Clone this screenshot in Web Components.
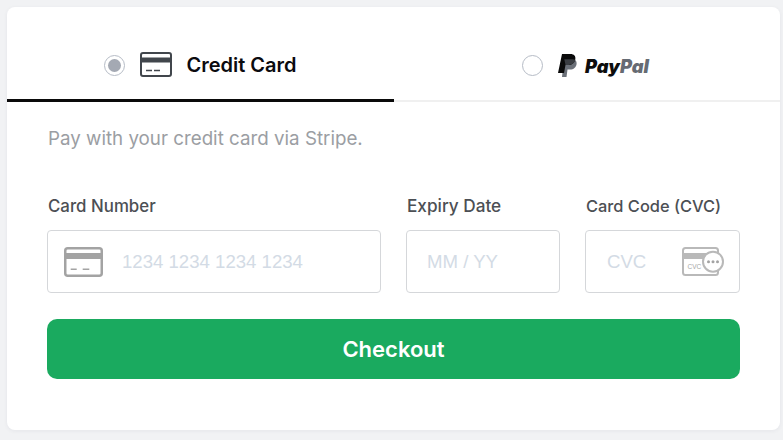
<!DOCTYPE html>
<html>
<head>
<meta charset="utf-8">
<style>
  html, body { margin: 0; height: 100%; background: #f1f2f4; }
  body { padding: 7px 3px 10px 7px; box-sizing: border-box; font-family: Inter, "Liberation Sans", sans-serif; overflow: hidden; }
</style>
</head>
<body>
<checkout-card>
  <pay-tab slot="tabs" active label="Credit Card">
    <svg slot="icon" width="32" height="26" viewBox="0 0 32 26">
      <rect x="1" y="1" width="30" height="23" rx="2" fill="#fff" stroke="#41464c" stroke-width="2"/>
      <rect x="1" y="5.500" width="30" height="5" fill="#41464c"/>
      <path d="M6 18.500h6M14 18.500h6" stroke="#41464c" stroke-width="1.400"/>
    </svg>
  </pay-tab>
  <pay-tab slot="tabs">
    <svg slot="icon" width="20" height="23" viewBox="0 0 20 23">
      <path d="M6 5h8c3 0 5 2 4.600 5-.5 3.500-3 5.500-6.500 5.500H9.500L8.500 23H4z" fill="#6b7078"/>
      <path d="M4 0h8.500c3.500 0 5.500 2.200 4.800 5.500-.7 3.500-3.500 5.500-7 5.500H7.500L6 19H0z" fill="#0a0a0a"/>
      <path d="M6.300 5.200h8c1.300 0 2.300.3 3 .9-.8 3-3.400 4.900-6.800 4.900H7.500z" fill="#3a3d42"/>
    </svg>
    <span slot="brand" class="pp"><b style="color:#0d0d0d">Pay</b><b style="color:#666b73">Pal</b></span>
  </pay-tab>

  <p slot="note">Pay with your credit card via Stripe.</p>

  <card-field slot="fields" label="Card Number" placeholder="1234 1234 1234 1234" lead style="--label-size: 16.850px">
    <svg slot="lead" width="39" height="30" viewBox="0 0 39 30">
      <rect x="1.250" y="1.250" width="36.500" height="27.500" rx="2.500" fill="#fff" stroke="#a3a3a3" stroke-width="2.500"/>
      <rect x="1.250" y="6" width="36.500" height="6" fill="#a3a3a3"/>
      <path d="M6.700 22.300h6M18.700 22.300h6.600" stroke="#a3a3a3" stroke-width="1.500"/>
    </svg>
  </card-field>
  <card-field slot="fields" label="Expiry Date" placeholder="MM / YY" style="--label-size: 17.200px; --ph-inset: 0px"></card-field>
  <card-field slot="fields" label="Card Code (CVC)" placeholder="CVC" style="--label-size: 16.400px">
    <svg slot="trail" width="42" height="29" viewBox="0 0 42 29">
      <rect x="1" y="1" width="35" height="27" rx="2.500" fill="#fff" stroke="#b9b9b9" stroke-width="2"/>
      <rect x="1" y="6" width="35" height="6" fill="#b9b9b9"/>
      <text x="5.500" y="21.500" font-family="Liberation Sans" font-size="6.500" fill="#a8a8a8">CVC</text>
      <circle cx="31" cy="14.700" r="10" fill="#fff" stroke="#b9b9b9" stroke-width="2"/>
      <circle cx="26.500" cy="14.700" r="1.500" fill="#a3a3a3"/>
      <circle cx="31" cy="14.700" r="1.500" fill="#a3a3a3"/>
      <circle cx="35.500" cy="14.700" r="1.500" fill="#a3a3a3"/>
    </svg>
  </card-field>

  <button-pay slot="action">Checkout</button-pay>
</checkout-card>

<script>
  class CheckoutCard extends HTMLElement {
    constructor() {
      super();
      this.attachShadow({mode: "open"}).innerHTML = `
        <style>
          :host {
            display: block;
            height: 423px;
            background: #fff;
            border-radius: 8px;
            box-shadow: 0 1px 4px rgba(30, 40, 60, .06);
            overflow: hidden;
          }
          .tabs { display: grid; grid-template-columns: 387px 1fr; height: 95px; }
          .body { padding: 22px 40px 0; }
          ::slotted(p) {
            margin: 0;
            padding-left: 1px;
            font-size: 18.750px;
            line-height: 30px;
            color: #9b9ea3;
          }
          .fields {
            display: grid;
            grid-template-columns: 334px 154px 155px;
            column-gap: 25px;
            margin-top: 41px;
          }
          .action { margin-top: 26px; }
        </style>
        <div class="tabs"><slot name="tabs"></slot></div>
        <div class="body">
          <slot name="note"></slot>
          <div class="fields"><slot name="fields"></slot></div>
          <div class="action"><slot name="action"></slot></div>
        </div>`;
    }
  }

  class PayTab extends HTMLElement {
    constructor() {
      super();
      this.attachShadow({mode: "open"}).innerHTML = `
        <style>
          :host {
            display: flex;
            align-items: center;
            justify-content: center;
            box-sizing: border-box;
            border-bottom: 2px solid #f0f0f0;
            padding-top: 24px;
            padding-right: 3px;
          }
          :host([active]) { border-bottom: 3px solid #0a0a0a; padding-right: 0; }
          .radio {
            width: 19px; height: 19px;
            border: 1px solid #b6bcc6;
            border-radius: 50%;
            background: #fff;
            display: grid;
            place-items: center;
            margin-right: 15px;
          }
          :host([active]) .radio::after {
            content: "";
            width: 13px; height: 13px;
            border-radius: 50%;
            background: #a4a9b3;
          }
          .icon { display: flex; }
          .label { font-size: 20px; font-weight: 600; color: #0b0b0f; margin-left: 14px; }
          ::slotted(.pp) {
            font-size: 18.300px;
            font-style: italic;
            font-weight: 800;
            margin-left: 7px;
          }
        </style>
        <span class="radio"></span>
        <span class="icon"><slot name="icon"></slot></span>
        <span class="label" id="l"></span>
        <slot name="brand"></slot>`;
    }
    connectedCallback() {
      const l = this.getAttribute("label");
      const $l = this.shadowRoot.getElementById("l");
      if (l) $l.textContent = l; else $l.remove();
    }
  }

  class CardField extends HTMLElement {
    constructor() {
      super();
      this.attachShadow({mode: "open"}).innerHTML = `
        <style>
          :host { display: block; }
          label {
            display: block;
            padding-left: 1px;
            font-size: var(--label-size, 17px);
            font-weight: 500;
            line-height: 22px;
            color: #4c4f54;
            margin-bottom: 13px;
          }
          .box {
            box-sizing: border-box;
            height: 63px;
            border: 1px solid #d5d7da;
            border-radius: 4px;
            display: flex;
            align-items: center;
            padding: 0 15px 0 20px;
          }
          :host([lead]) .box { padding-left: 16px; }
          .ph {
            flex: 1;
            font-family: "Liberation Sans", Arial, sans-serif;
            font-size: 18.600px;
            color: #d3dbe5;
            white-space: nowrap;
            padding-top: 1px;
            padding-left: var(--ph-inset, 1px);
          }
          :host([lead]) .ph { margin-left: 18px; }
          .lead, .trail { display: flex; }
        </style>
        <label id="l"></label>
        <div class="box">
          <span class="lead"><slot name="lead"></slot></span>
          <span class="ph" id="p"></span>
          <span class="trail"><slot name="trail"></slot></span>
        </div>`;
    }
    connectedCallback() {
      this.shadowRoot.getElementById("l").textContent = this.getAttribute("label");
      this.shadowRoot.getElementById("p").textContent = this.getAttribute("placeholder");
    }
  }

  class ButtonPay extends HTMLElement {
    constructor() {
      super();
      this.attachShadow({mode: "open"}).innerHTML = `
        <style>
          :host {
            display: flex;
            align-items: center;
            justify-content: center;
            height: 60px;
            border-radius: 10px;
            background: #1aaa5f;
            color: #fff;
            font-size: 22px;
            font-weight: 600;
            cursor: pointer;
          }
        </style>
        <slot></slot>`;
    }
  }

  customElements.define("checkout-card", CheckoutCard);
  customElements.define("pay-tab", PayTab);
  customElements.define("card-field", CardField);
  customElements.define("button-pay", ButtonPay);
</script>
</body>
</html>
